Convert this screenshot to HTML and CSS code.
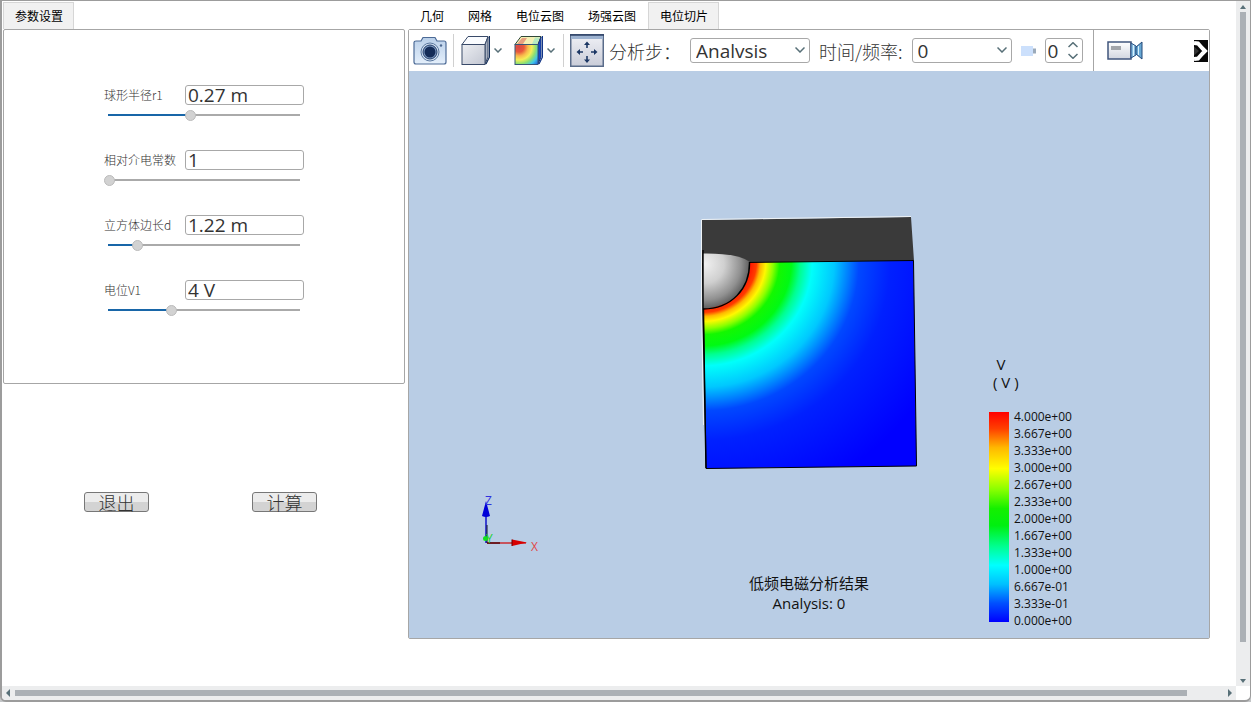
FILE: index.html
```html
<!DOCTYPE html>
<html lang="zh-CN">
<head>
<meta charset="utf-8">
<title>低频电磁分析</title>
<link rel="stylesheet" href="styles.css">
</head>
<body>
<div class="window">
  <main class="content">
    <section class="side">
      <div class="tabs" role="tablist">
        <button class="tab active" role="tab" aria-selected="true">参数设置</button>
      </div>
      <form class="params">
        <div class="field">
          <div class="field-row"><label for="r1">球形半径r1</label><input class="value" id="r1" type="text" value="0.27 m"></div>
          <input class="slider" type="range" min="0" max="1000" value="426" style="--f:0.426" aria-label="球形半径r1">
        </div>
        <div class="field">
          <div class="field-row"><label for="eps">相对介电常数</label><input class="value" id="eps" type="text" value="1"></div>
          <input class="slider" type="range" min="0" max="1000" value="0" style="--f:0" aria-label="相对介电常数">
        </div>
        <div class="field">
          <div class="field-row"><label for="d">立方体边长d</label><input class="value" id="d" type="text" value="1.22 m"></div>
          <input class="slider" type="range" min="0" max="1000" value="147" style="--f:0.147" aria-label="立方体边长d">
        </div>
        <div class="field">
          <div class="field-row"><label for="v1">电位V1</label><input class="value" id="v1" type="text" value="4 V"></div>
          <input class="slider" type="range" min="0" max="1000" value="326" style="--f:0.326" aria-label="电位V1">
        </div>
      </form>
      <div class="actions">
        <button class="push" type="button">退出</button>
        <button class="push" type="button">计算</button>
      </div>
    </section>

    <section class="viewer">
      <div class="tabs" role="tablist">
        <button class="tab" role="tab">几何</button>
        <button class="tab" role="tab">网格</button>
        <button class="tab" role="tab">电位云图</button>
        <button class="tab" role="tab">场强云图</button>
        <button class="tab active" role="tab" aria-selected="true">电位切片</button>
      </div>
      <div class="panel">
        <div class="toolbar">
          <div class="group group-camera">
            <button class="tool" type="button" aria-label="截图">
              <svg width="34" height="30" viewBox="0 0 34 30">
                <defs><linearGradient id="cam" x1="0" y1="0" x2="0" y2="1"><stop offset="0" stop-color="#b9cfe9"/><stop offset="1" stop-color="#e4effb"/></linearGradient></defs>
                <path d="M1 6.500Q1 5 3 5H8L10 1.500H22L24 5H31Q33 5 33 7V26Q33 28 31 28H3Q1 28 1 26Z" fill="url(#cam)" stroke="#4c6a96" stroke-width="1.200"/>
                <circle cx="17" cy="16" r="9" fill="#d4e2f3" stroke="#5b789f"/>
                <circle cx="17" cy="16" r="7" fill="#7c97be" stroke="#243f6b"/>
                <circle cx="17" cy="16" r="5.500" fill="#142c58"/>
                <circle cx="28" cy="9.500" r="1.200" fill="#4e6a92"/>
              </svg>
            </button>
          </div>
          <div class="group group-cubes">
            <button class="tool" type="button" aria-label="显示模式">
              <svg width="29" height="32" viewBox="0 0 29 32">
                <defs><linearGradient id="cube" x1="0" y1="0" x2="1" y2="1"><stop offset="0" stop-color="#eceef2"/><stop offset="1" stop-color="#c2c6d2"/></linearGradient></defs>
                <path d="M1 9.500 7 1.500H27L24 9.500Z" fill="#fafcff" stroke="#394a69"/>
                <path d="M24 9.500 27 2V22L24 29Z" fill="#aab2c2" stroke="#394a69"/>
                <rect x="1" y="9.500" width="23" height="20" fill="url(#cube)" stroke="#394a69"/>
                <path d="M28.500 1V22L25 29" fill="none" stroke="#16305c" stroke-width="1.200"/>
              </svg>
              <svg width="8" height="5" viewBox="0 0 8 5"><path d="M.5.500 4 4 7.500.500" class="chev"/></svg>
            </button>
            <button class="tool" type="button" aria-label="云图模式">
              <svg width="29" height="32" viewBox="0 0 29 32">
                <defs><radialGradient id="rain" gradientUnits="userSpaceOnUse" cx="5" cy="12" r="28">
                  <stop offset="0" stop-color="#d84848"/><stop offset=".18" stop-color="#e8583c"/><stop offset=".32" stop-color="#f8b84c"/><stop offset=".46" stop-color="#f6ee58"/><stop offset=".6" stop-color="#90e070"/><stop offset=".74" stop-color="#40c8e8"/><stop offset=".9" stop-color="#2060e0"/><stop offset="1" stop-color="#1834c0"/></radialGradient></defs>
                <path d="M1 9.500 7 1.500H27L24 9.500Z" fill="#f4f0b4" stroke="#304838"/>
                <path d="M3 9 8 3H13L9 9Z" fill="#e8a080"/><path d="M18 9 21 2.500H26L23 9Z" fill="#b6eac2"/>
                <path d="M24 9.500 27 2V22L24 29Z" fill="#1746cc" stroke="#18387b"/>
                <rect x="1" y="9.500" width="23" height="20" fill="url(#rain)" stroke="#365678"/>
                <path d="M28.500 1V22L25 29" fill="none" stroke="#123587" stroke-width="1.200"/>
              </svg>
              <svg width="8" height="5" viewBox="0 0 8 5"><path d="M.5.500 4 4 7.500.500" class="chev"/></svg>
            </button>
          </div>
          <div class="group group-step">
            <button class="tool" type="button" aria-label="适应窗口">
              <svg width="34" height="33" viewBox="0 0 34 33">
                <defs><linearGradient id="fit" x1="0" y1="0" x2="0" y2="1"><stop offset="0" stop-color="#f0f1f6"/><stop offset="1" stop-color="#c9ccd8"/></linearGradient></defs>
                <rect x=".75" y=".75" width="32.500" height="31.500" fill="url(#fit)" stroke="#5a6c8a" stroke-width="1.500"/>
                <rect x="1" y="1" width="32" height="4" fill="#9cb2d0"/><path d="M0 1H34" stroke="#2c4165" stroke-width="1.500"/>
                <g fill="#1c3764"><path d="M17 7.500 20 11H14Z M17 29 20 25.500H14Z M6.500 18 10 15V21Z M27.500 18 24 15V21Z"/><path d="M16.200 10h1.600v4h-1.600z M16.200 22h1.600v4h-1.600z M9 17.200h4v1.600H9z M21 17.200h4v1.600h-4z"/></g>
              </svg>
            </button>
            <label class="caption step-label" for="step">分析步：</label>
            <span class="combo combo-wide"><select id="step"><option>Analvsis</option></select><svg width="10" height="6" viewBox="0 0 10 6"><path d="M.5.500 5 5 9.500.500" class="chev"/></svg></span>
            <label class="caption" for="freq">时间/频率:</label>
            <span class="combo"><select id="freq"><option>0</option></select><svg width="10" height="6" viewBox="0 0 10 6"><path d="M.5.500 5 5 9.500.500" class="chev"/></svg></span>
            <svg class="plug" width="15" height="10" viewBox="0 0 15 10"><path d="M0 0H12V10H0Z" fill="#cce0fc"/><path d="M12 2.500H15V7.500H12Z" fill="#9baaba"/></svg>
            <span class="spin"><input type="number" value="0" aria-label="帧"><svg width="10" height="17" viewBox="0 0 10 17"><path d="M.5 5 5 .700 9.500 5M.5 12 5 16.300 9.500 12" class="chev"/></svg></span>
          </div>
          <div class="group group-video">
            <button class="tool" type="button" aria-label="录制动画">
              <svg width="36" height="19" viewBox="0 0 36 19">
                <defs><linearGradient id="vid" x1="0" y1="0" x2="0" y2="1"><stop offset="0" stop-color="#fff"/><stop offset="1" stop-color="#d2d6e0"/></linearGradient></defs>
                <rect x="1" y="1" width="23" height="17" fill="url(#vid)" stroke="#40557c" stroke-width="1.500"/>
                <rect x="4" y="5" width="10" height="4" fill="#a2a5aa"/>
                <path d="M24 2 29 5V14L24 17Z" fill="#86bce0" stroke="#284f82"/>
                <path d="M29 6 35 1V18L29 13Z" fill="#68a8d4" stroke="#234879"/>
                <path d="M26.500 4V15M31.500 5V14" stroke="#d8f0fc"/>
              </svg>
            </button>
            <button class="tool" type="button" aria-label="更多">
              <svg width="14" height="22" viewBox="0 0 14 22"><path d="M0 0H14V22H0Z" fill="#080808"/><path d="M0 3 4 3.500 8 8 11 11 8 14 4 18.500 0 19" fill="none" stroke="#fff" stroke-width="4"/><path d="M0 6.500 5 11 0 15.500Z" fill="#333"/></svg>
            </button>
          </div>
        </div>

        <div class="stage">
          <svg class="model" width="240" height="275" viewBox="690 205 240 275">
            <defs>
              <radialGradient id="field" gradientUnits="userSpaceOnUse" cx="0" cy="0" r="260" gradientTransform="translate(703 261) scale(1 .96)">
                <stop offset=".181" stop-color="#ff1400"/><stop offset=".206" stop-color="#ff3c00"/><stop offset=".222" stop-color="#ffb800"/><stop offset=".242" stop-color="#fff800"/><stop offset=".27" stop-color="#8cff00"/><stop offset=".295" stop-color="#14f800"/><stop offset=".34" stop-color="#00fa14"/><stop offset=".375" stop-color="#00ff90"/><stop offset=".42" stop-color="#00fffa"/><stop offset=".505" stop-color="#00c8ff"/><stop offset=".55" stop-color="#008cff"/><stop offset=".6" stop-color="#0048ff"/><stop offset=".72" stop-color="#0020ff"/><stop offset="1" stop-color="#0000ff"/>
              </radialGradient>
              <radialGradient id="ball" gradientUnits="userSpaceOnUse" cx="705" cy="264" r="48">
                <stop offset="0" stop-color="#f0f0f0"/><stop offset=".4" stop-color="#d0d0d0"/><stop offset=".75" stop-color="#909090"/><stop offset="1" stop-color="#4c4c4c"/>
              </radialGradient>
            </defs>
            <path d="M701.500 220 911 217 914 261 703 264 703 340Z" fill="#3a3a3a"/>
            <path d="M701.500 219.500 911 216.500M701.500 220V300L703.500 425" fill="none" stroke="#eef2f5"/>
            <path d="M703 263 913.500 260.500 916.500 466 706 468.500Z" fill="url(#field)" stroke="#000"/>
            <path d="M703 253.500Q738 253 750 262Q750 304 703 309Z" fill="url(#ball)"/>
            <path d="M749.500 262C750 289 731 309 703 309V250M703 309 706 468" fill="none" stroke="#000" stroke-width="1.400"/>
          </svg>
          <svg class="triad" width="70" height="65" viewBox="475 490 70 65">
            <path d="M486 543V505" stroke="#1010c8" stroke-width="1.500"/><path d="M487 525V543H500" fill="none" stroke="#101030"/>
            <path d="M486 501 490 516Q486 518 482 516Z" fill="#0000d8"/>
            <path d="M500 543H526" stroke="#d00000" stroke-width="1.200"/><path d="M487 543H500" stroke="#700000" stroke-width="1.500"/>
            <path d="M527 542.500 512 539.500V546Z" fill="#d80000"/><path d="M512 539.500V546" stroke="#600"/>
            <circle cx="485.500" cy="538.500" r="2.500" fill="#10e020"/>
            <text x="485" y="505" class="axis axis-z">Z</text><text x="486" y="543" class="axis axis-y">Y</text><text x="531" y="551" class="axis axis-x">X</text>
          </svg>
          <div class="result"><div>低频电磁分析结果</div><div>Analysis: 0</div></div>
          <div class="legend">
            <div class="legend-title"><div>V</div><div class="unit">( V )</div></div>
            <div class="legend-body">
              <div class="bar"></div>
              <ul class="ticks">
                <li>4.000e+00</li><li>3.667e+00</li><li>3.333e+00</li><li>3.000e+00</li><li>2.667e+00</li><li>2.333e+00</li><li>2.000e+00</li><li>1.667e+00</li><li>1.333e+00</li><li>1.000e+00</li><li>6.667e-01</li><li>3.333e-01</li><li>0.000e+00</li>
              </ul>
            </div>
          </div>
        </div>
      </div>
    </section>
  </main>
  <div class="vscroll">
    <svg width="6" height="4" viewBox="0 0 6 4"><path d="M3 0 6 4H0Z" class="arrow"/></svg>
    <div class="track"><div class="thumb"></div></div>
    <svg width="6" height="4" viewBox="0 0 6 4"><path d="M0 0H6L3 4Z" class="arrow"/></svg>
  </div>
  <div class="hscroll">
    <svg width="4" height="8" viewBox="0 0 4 8"><path d="M4 0V8L0 4Z" class="arrow"/></svg>
    <div class="track"><div class="thumb"></div></div>
    <svg width="4" height="8" viewBox="0 0 4 8"><path d="M0 0 4 4 0 8Z" class="arrow"/></svg>
  </div>
</div>
</body>
</html>
```

FILE: styles.css
```css
* { box-sizing: border-box; }
body {
  margin: 0;
  background: #c4c6c8;
  color: #333;
  font: 12px/18px "Open Sans", "Noto Sans CJK SC", sans-serif;
}
button, input, select { font: inherit; color: inherit; margin: 0; }
.window {
  display: grid;
  grid-template: minmax(0, 1fr) 14px / minmax(0, 1fr) 14px;
  height: 100vh;
  background: #fff;
  border: solid #9c9c9c;
  border-width: 1px 1px 2px 2px;
  border-radius: 0 0 6px 6px;
  overflow: hidden;
}
.content { display: flex; gap: 3px; padding: 1px 26px 0 1px; overflow: hidden; }
.side { flex: 0 0 402px; }
.viewer { flex: 1; min-width: 0; }

.tabs { display: flex; height: 27px; }
.tab {
  border: 1px solid transparent;
  border-bottom: 0;
  background: none;
  padding: 0 11px;
  color: #000;
  font-family: "Noto Sans CJK SC", sans-serif;
}
.tab.active { padding-right: 10px; background: #f1f1f1; border-color: #d6d6d6; }

.params {
  display: flex;
  flex-direction: column;
  gap: 25px;
  height: 355px;
  padding: 55px 100px 0;
  border: 1px solid #a6a6a6;
  border-radius: 2px;
}
.field { display: flex; flex-direction: column; height: 40px; }
.field-row { display: flex; align-items: center; height: 20px; }
.field-row label { flex: 1; }
.field-row label, .push, .caption { font-family: "Noto Sans CJK SC", sans-serif; font-weight: 300; }
.value {
  width: 119px;
  height: 20px;
  padding: 0 2px;
  border: 1px solid #a8a8a8;
  border-radius: 3px;
  background: #fff;
  font-size: 19px;
  line-height: 18px;
}
.slider {
  appearance: none;
  width: 100%;
  height: 20px;
  background:
    linear-gradient(#1866a8, #1866a8) 4px 50% / calc((100% - 10px) * var(--f)) 2px no-repeat,
    linear-gradient(#aaa, #aaa) 50% 50% / calc(100% - 8px) 2px no-repeat;
}
.slider::-webkit-slider-thumb {
  appearance: none;
  width: 11px;
  height: 11px;
  border: 1px solid #bbb;
  border-radius: 50%;
  background: #d2d2d2;
}
.actions { display: flex; gap: 103px; padding: 108px 81px; }
.push {
  width: 65px;
  height: 20px;
  padding: 0;
  border: 1px solid #777;
  border-radius: 3px;
  background: linear-gradient(#ececec 50%, #d3d3d3 50%);
  font-size: 18px;
  line-height: 18px;
}

.panel { border: 1px solid #a6a6a6; border-radius: 2px; }
.toolbar { display: flex; height: 41px; background: #fff; overflow: hidden; }
.group { display: flex; align-items: center; }
.group-camera { padding: 0 6px 0 4px; }
.group-cubes { gap: 12px; margin: 4px 0; padding: 0 8px 0 7px; border: solid #d0d0d0; border-width: 0 1px; }
.group-step { padding: 0 10px 0 6px; font-size: 18px; }
.group-video { flex: 1; justify-content: space-between; padding: 0 1px 0 13px; border-left: 1px solid #a6a6a6; }
.tool { display: flex; align-items: center; gap: 4px; padding: 0; border: 0; background: none; }
.chev { fill: none; stroke: #587078; stroke-width: 1.5; }
.caption { margin: 0 9px; white-space: nowrap; }
.step-label { width: 76px; margin: 0 5px; }
.combo { position: relative; width: 100px; height: 25px; }
.combo-wide { width: 120px; }
.combo select {
  appearance: none;
  width: 100%;
  height: 100%;
  padding: 0 20px 0 5px;
  border: 1px solid #a8a8a8;
  border-radius: 3px;
  background: #fff;
  font-size: 19px;
}
.combo svg { position: absolute; right: 5px; top: 9px; }
.plug { margin: 0 9px; }
.spin { position: relative; width: 38px; height: 25px; }
.spin input {
  appearance: textfield;
  width: 100%;
  height: 100%;
  padding: 0 2px;
  border: 1px solid #a8a8a8;
  border-radius: 3px;
  font-size: 19px;
}
.spin svg { position: absolute; right: 5px; top: 4px; }

.stage { position: relative; height: 567px; background: #b9cde5; color: #111; }
.model { position: absolute; left: 281px; top: 134px; }
.triad { position: absolute; left: 66px; bottom: 83px; }
.axis { font: 12px "Open Sans", sans-serif; }
.axis-x { fill: #e04848; }
.axis-y { fill: #20d030; }
.axis-z { fill: #3030e0; }
.result {
  position: absolute;
  inset: auto 0 25px;
  font-size: 15px;
  line-height: 20px;
  text-align: center;
}
.legend { position: absolute; right: 134px; bottom: 9px; width: 86px; }
.legend-title { width: 24px; margin-bottom: 17px; font-size: 15px; line-height: 18px; text-align: center; }
.unit { padding-left: 4px; white-space: nowrap; }
.legend-body { display: flex; gap: 5px; }
.bar {
  width: 20px;
  margin: 4px 0 7px;
  background: linear-gradient(#f00, #ff4000 8%, #ffb800 17%, #ff0 27%, #8f0 37%, #14f000 46%, #00f010 54%, #00ff90 64%, #0ff 73%, #00c0ff 82%, #0050ff 91%, #00f);
}
.ticks { margin: 0; padding: 0; list-style: none; font: 12px/17px "Open Sans", sans-serif; }

.arrow { fill: #587078; }
.vscroll, .hscroll { display: flex; align-items: center; background: #ecedee; }
.vscroll { flex-direction: column; padding: 4px 0 3px; }
.hscroll { padding: 0 4px; }
.track { flex: 1; }
.vscroll .track { width: 6px; margin: 3px 0 4px; }
.hscroll .track { height: 6px; margin: 0 5px; }
.thumb { background: #abb0b5; }
.vscroll .thumb { width: 100%; height: 95%; }
.hscroll .thumb { width: 97%; height: 100%; }
```
